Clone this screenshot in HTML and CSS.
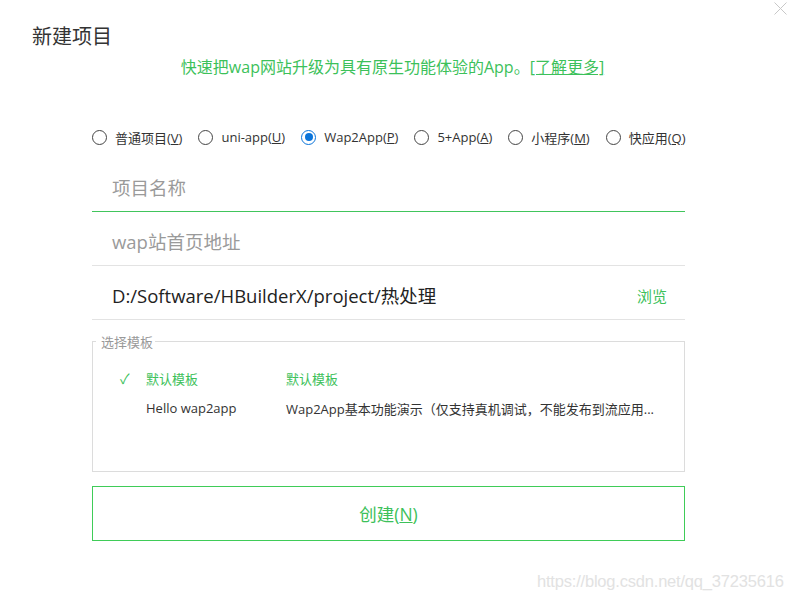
FILE: index.html
```html
<!DOCTYPE html>
<html lang="zh">
<head>
<meta charset="utf-8">
<link rel="stylesheet" href="styles.css">
</head>
<body>
<div class="dialog">
  <div class="close" aria-label="关闭">
    <svg width="13" height="13" viewBox="0 0 13 13"><path d="M0.5 0.5 L12.5 12.5 M12.5 0.5 L0.5 12.5" stroke="#c8c8c8" stroke-width="1" fill="none"/></svg>
  </div>
  <h1 class="title">新建项目</h1>
  <p class="subtitle">快速把wap网站升级为具有原生功能体验的App。<a class="more">[了解更多]</a></p>
  <div class="content">
    <div class="radios">
      <label class="radio"><span class="dot"></span><span>普通项目(<u>V</u>)</span></label>
      <label class="radio"><span class="dot"></span><span>uni-app(<u>U</u>)</span></label>
      <label class="radio checked"><span class="dot"></span><span>Wap2App(<u>P</u>)</span></label>
      <label class="radio"><span class="dot"></span><span>5+App(<u>A</u>)</span></label>
      <label class="radio"><span class="dot"></span><span>小程序(<u>M</u>)</span></label>
      <label class="radio"><span class="dot"></span><span>快应用(<u>Q</u>)</span></label>
    </div>
    <div class="field active"><span class="placeholder">项目名称</span></div>
    <div class="field"><span class="placeholder">wap站首页地址</span></div>
    <div class="field"><span class="value">D:/Software/HBuilderX/project/热处理</span><a class="browse">浏览</a></div>
    <fieldset class="templates">
      <legend>选择模板</legend>
      <div class="trow selected">
        <span class="check">✓</span><span class="tname">默认模板</span><span class="tdesc">默认模板</span>
      </div>
      <div class="trow">
        <span class="check"></span><span class="tname">Hello wap2app</span><span class="tdesc">Wap2App基本功能演示（仅支持真机调试，不能发布到流应用...</span>
      </div>
    </fieldset>
    <div class="create">创建(<u>N</u>)</div>
  </div>
  <div class="watermark">https://blog.csdn.net/qq_37235616</div>
</div>
</body>
</html>
```
FILE: styles.css
```css
* { box-sizing: border-box; }
html, body { margin: 0; padding: 0; background: #fff; }
body {
  font-family: "Open Sans", "Noto Sans", "Noto Sans CJK SC", sans-serif;
  color: #333;
  width: 791px;
  height: 601px;
  overflow: hidden;
}
.dialog {
  position: relative;
  width: 791px;
  height: 601px;
  padding-top: 22px;
}
.close {
  position: absolute;
  top: 2px;
  right: 4px;
  width: 13px;
  height: 13px;
  line-height: 0;
}
.title {
  margin: 0 0 0 32px;
  font-size: 20px;
  font-weight: normal;
  line-height: 28px;
  color: #333;
  font-family: "Noto Sans CJK SC", sans-serif;
}
.subtitle {
  margin: 5px 0 0 0;
  text-align: center;
  font-size: 16px;
  line-height: 24px;
  color: #3cc15a;
  padding-left: 0;
  padding-right: 6px;
}
.more { text-decoration: underline; color: #3cc15a; }
.content {
  margin: 0 106px 0 92px;
  width: 593px;
}
.radios {
  display: flex;
  align-items: center;
  margin-top: 46px;
  height: 24px;
  font-size: 13px;
  white-space: nowrap;
}
.radio {
  display: flex;
  align-items: center;
  margin-right: 16px;
  color: #333;
}
.radio:last-child { margin-right: 0; }
.dot {
  width: 15px;
  height: 15px;
  border: 1px solid #444;
  border-radius: 50%;
  margin-right: 8px;
  position: relative;
  flex: none;
}
.radio.checked .dot { border-color: #0a74da; }
.radio.checked .dot::after {
  content: "";
  position: absolute;
  left: 2.5px; top: 2.5px;
  width: 8px; height: 8px;
  border-radius: 50%;
  background: #0a74da;
}
.field {
  display: flex;
  align-items: center;
  justify-content: space-between;
  height: 54px;
  padding: 5px 18px 0 20px;
  border-bottom: 1px solid #e3e3e3;
  font-size: 18.5px;
}
.radios + .field { margin-top: 6px; height: 57px; padding-top: 8px; }
.field.active { border-bottom-color: #41c55c; }
.placeholder { color: #9a9a9a; }
.value { color: #222; }
.browse { color: #3cc15a; font-size: 15px; }
.templates {
  margin: 12px 0 0 0;
  padding: 12px 0 0 0;
  border: 1px solid #dcdcdc;
  height: 140px;
  font-size: 13px;
}
.templates legend {
  margin-left: 3px;
  padding: 0 2px 0 5px;
  color: #999;
  font-size: 13px;
}
.trow {
  display: flex;
  align-items: center;
  height: 30px;
  color: #333;
}
.check {
  width: 53px;
  padding-left: 27px;
  color: #3cc15a;
  font-size: 14px;
}
.tname { width: 140px; }
.selected .tname, .selected .tdesc { color: #3cc15a; }
.create {
  margin-top: 14px;
  height: 55px;
  border: 1px solid #3fcc58;
  display: flex;
  align-items: center;
  justify-content: center;
  color: #3cc15a;
  font-size: 17.5px;
}
.watermark {
  position: absolute;
  left: 537px;
  top: 572px;
  font-family: "Liberation Sans", sans-serif;
  font-size: 16.5px;
  color: #e2e2e2;
  letter-spacing: -0.2px;
}
```
